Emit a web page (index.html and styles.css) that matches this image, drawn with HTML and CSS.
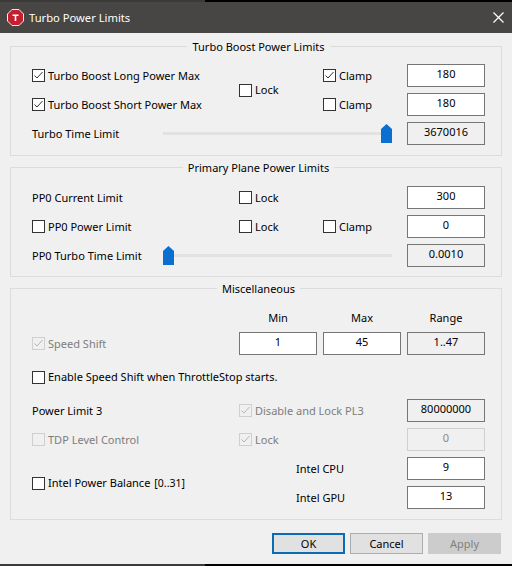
FILE: index.html
```html
<!DOCTYPE html>
<html lang="en">
<head>
    <meta charset="UTF-8">
    <title>Turbo Power Limits</title>
    <link rel="stylesheet" href="styles.css">
</head>
<body>
    <div class="window">
        <div class="edge edge-top"></div>
        <div class="titlebar">
            <svg class="app-icon" width="17" height="17" viewBox="0 0 17 17">
                <path class="app-icon-bg" d="M5 .5h7L16.500 5v7L12 16.500H5L.5 12V5z"/>
                <path class="app-icon-t" d="M5.500 5.500h6v1.500H9.300v5H7.700V7H5.500z"/>
            </svg>
            <span class="title">Turbo Power Limits</span>
            <svg class="close" width="11" height="11" viewBox="0 0 11 11">
                <path d="M.5.5l10 10M10.500.5l-10 10"/>
            </svg>
        </div>

        <div class="content">
            <!-- Turbo Boost -->
            <fieldset class="group">
                <legend>Turbo Boost Power Limits</legend>
                <div class="grid">
                    <label class="check"><span class="box"><svg viewBox="0 0 11 11"><path d="M1.500 5.500l2.500 2.500 5.500-6"/></svg></span>Turbo Boost Long Power Max</label>
                    <label class="check lock-two"><span class="box"></span>Lock</label>
                    <label class="check col-3"><span class="box"><svg viewBox="0 0 11 11"><path d="M1.500 5.500l2.500 2.500 5.500-6"/></svg></span>Clamp</label>
                    <div class="field col-4">180</div>

                    <label class="check"><span class="box"><svg viewBox="0 0 11 11"><path d="M1.500 5.500l2.500 2.500 5.500-6"/></svg></span>Turbo Boost Short Power Max</label>
                    <label class="check col-3"><span class="box"></span>Clamp</label>
                    <div class="field col-4">180</div>

                    <div class="slider-row">
                        <span class="text">Turbo Time Limit</span>
                        <div class="slider slider-end">
                            <svg class="thumb" width="11" height="19" viewBox="0 0 11 19"><path d="M5.500 0L11 5v14H0V5z"/></svg>
                        </div>
                    </div>
                    <div class="field readonly col-4">3670016</div>
                </div>
            </fieldset>

            <!-- Primary Plane -->
            <fieldset class="group group-plane">
                <legend>Primary Plane Power Limits</legend>
                <div class="grid">
                    <span class="text">PP0 Current Limit</span>
                    <label class="check col-2"><span class="box"></span>Lock</label>
                    <div class="field col-4">300</div>

                    <label class="check"><span class="box"></span>PP0 Power Limit</label>
                    <label class="check col-2"><span class="box"></span>Lock</label>
                    <label class="check col-3"><span class="box"></span>Clamp</label>
                    <div class="field col-4">0</div>

                    <div class="slider-row">
                        <span class="text">PP0 Turbo Time Limit</span>
                        <div class="slider">
                            <svg class="thumb" width="11" height="19" viewBox="0 0 11 19"><path d="M5.500 0L11 5v14H0V5z"/></svg>
                        </div>
                    </div>
                    <div class="field readonly col-4">0.0010</div>
                </div>
            </fieldset>

            <!-- Miscellaneous -->
            <fieldset class="group group-misc">
                <legend>Miscellaneous</legend>
                <div class="grid">
                    <span class="head col-2">Min</span>
                    <span class="head col-3">Max</span>
                    <span class="head col-4">Range</span>

                    <label class="check disabled"><span class="box"><svg viewBox="0 0 11 11"><path d="M1.500 5.500l2.500 2.500 5.500-6"/></svg></span>Speed Shift</label>
                    <div class="field col-2">1</div>
                    <div class="field col-3">45</div>
                    <div class="field readonly col-4">1..47</div>

                    <label class="check enable-row"><span class="box"></span>Enable Speed Shift when ThrottleStop starts.</label>

                    <span class="text">Power Limit 3</span>
                    <label class="check disabled wide"><span class="box"><svg viewBox="0 0 11 11"><path d="M1.500 5.500l2.500 2.500 5.500-6"/></svg></span>Disable and Lock PL3</label>
                    <div class="field readonly col-4">80000000</div>

                    <label class="check disabled"><span class="box"></span>TDP Level Control</label>
                    <label class="check disabled col-2"><span class="box"><svg viewBox="0 0 11 11"><path d="M1.500 5.500l2.500 2.500 5.500-6"/></svg></span>Lock</label>
                    <div class="field off col-4">0</div>

                    <label class="check balance"><span class="box"></span>Intel Power Balance<span class="range">[0..31]</span></label>
                    <span class="text intel">Intel CPU</span>
                    <div class="field col-4">9</div>
                    <span class="text intel">Intel GPU</span>
                    <div class="field col-4">13</div>
                </div>
            </fieldset>

            <div class="buttons">
                <button class="button default">OK</button>
                <button class="button">Cancel</button>
                <button class="button" disabled>Apply</button>
            </div>
        </div>
        <div class="edge"></div>
    </div>
</body>
</html>
```

FILE: styles.css
```css
* {
    margin: 0;
    padding: 0;
    box-sizing: border-box;
}

body {
    background-color: #f0f0f0;
    color: #000;
    font-family: "Noto Sans", sans-serif;
    font-size: 11px;
    line-height: 16px;
}

.window {
    display: flex;
    flex-direction: column;
    width: 512px;
    height: 566px;
    overflow: hidden;
}

/* Dark strips at the top and bottom of the capture */
.edge {
    flex: none;
    height: 2px;
    background: linear-gradient(to right, #3a3a3a 205px, #000 205px);
}

/* Title bar */
.titlebar {
    flex: none;
    display: flex;
    align-items: center;
    height: 31px;
    padding: 0 8px 0 7px;
    background-color: #474644;
    color: #fff;
}

.app-icon {
    margin-right: 5px;
}

.app-icon-bg {
    fill: #c2202f;
    stroke: #eee;
}

.app-icon-t {
    fill: #fff;
}

.title {
    flex: 1;
    font-size: 11.2px;
}

.close path {
    fill: none;
    stroke: #fff;
    stroke-width: 1.2;
}

.content {
    flex: 1;
    padding: 5px 10px 0;
}

/* Groups */
.group {
    border: 1px solid #dcdcdc;
    margin-bottom: 3px;
    padding: 10px 16px 10px 21px;
}

.group-plane {
    padding-top: 11px;
    padding-bottom: 9px;
}

.group-misc {
    padding-top: 7px;
}

.group legend {
    height: 16px;
    margin: 0 auto;
    padding: 1px 5px 0;
    line-height: 16px;
}

.grid {
    display: grid;
    grid-template-columns: 201px 78px 78px 78px;
    grid-auto-rows: minmax(23px, auto);
    gap: 6px;
    align-items: center;
}

.col-2 { grid-column: 2; }
.col-3 { grid-column: 3; }
.col-4 { grid-column: 4; }

.lock-two {
    grid-column: 2;
    grid-row: 1 / span 2;
}

.wide {
    grid-column: 2 / span 2;
}

.text,
.check {
    white-space: nowrap;
}

.check {
    display: flex;
    align-items: center;
}

.box {
    flex: none;
    width: 13px;
    height: 13px;
    margin-right: 3px;
    background-color: #fff;
    border: 1px solid #333;
}

.box svg {
    display: block;
    width: 11px;
    height: 11px;
}

.box path {
    fill: none;
    stroke: #333;
    stroke-width: 1;
}

.check.disabled {
    color: #7d7d7d;
}

.check.disabled .box {
    background-color: #f0f0f0;
    border-color: #cfcfcf;
}

.check.disabled .box path {
    stroke: #b5b5b5;
}

.field {
    height: 23px;
    background-color: #fff;
    border: 1px solid #767676;
    line-height: 18px;
    text-align: center;
}

.field.readonly {
    background-color: #f0f0f0;
}

.field.off {
    background-color: #f0f0f0;
    border-color: #cfcfcf;
    color: #8a8a8a;
}

/* Sliders */
.slider-row {
    grid-column: 1 / span 3;
    display: flex;
    align-items: center;
}

.slider-row .text {
    width: 131px;
}

.slider {
    display: flex;
    width: 229px;
    background: linear-gradient(#e2e2e2, #e2e2e2) center / 100% 3px no-repeat;
}

.slider-end {
    justify-content: flex-end;
}

.thumb {
    display: block;
    fill: #0a6fd0;
}

.head {
    align-self: end;
    text-align: center;
}

.enable-row {
    grid-column: 1 / span 4;
    margin: 8px 0;
}

.balance {
    grid-column: 1;
    grid-row: 6 / span 2;
}

.range {
    margin-left: 4px;
    font-size: 10.5px;
}

.intel {
    grid-column: 2 / span 2;
    padding-left: 57px;
}

/* Buttons */
.buttons {
    display: flex;
    justify-content: flex-end;
    gap: 5px;
    margin-top: 13px;
    padding-right: 1px;
}

.button {
    width: 73px;
    height: 21px;
    background-color: #e1e1e1;
    border: 1px solid #adadad;
    color: #000;
    font: inherit;
}

.button.default {
    border: 2px solid #0a6cb4;
}

.button:disabled {
    background-color: #cccccc;
    border-color: #cccccc;
    color: #808080;
}
```
